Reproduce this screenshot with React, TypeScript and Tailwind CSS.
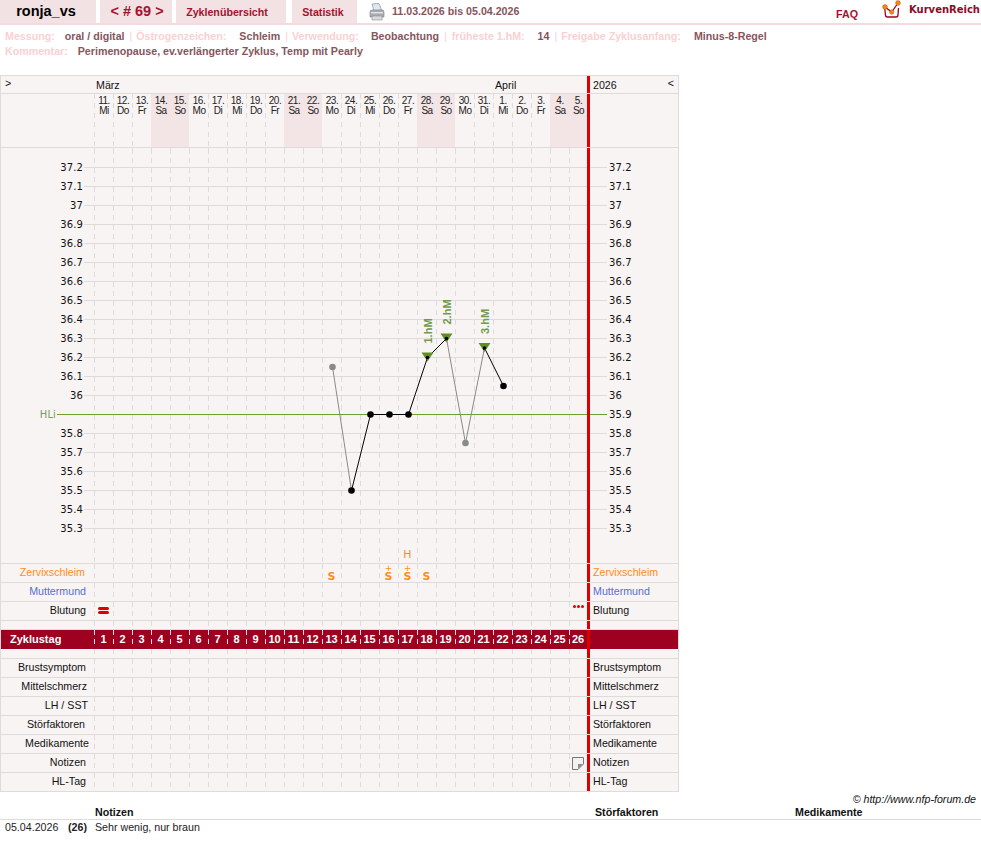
import type { ReactNode } from 'react';

const sans = "font-['Liberation_Sans',Arial,sans-serif]";
const days = Array.from({ length: 26 }, (_, i) => ({
  date: i < 21 ? i + 11 : i - 20,
  name: ['Mi', 'Do', 'Fr', 'Sa', 'So', 'Mo', 'Di'][i % 7],
  weekend: i % 7 === 3 || i % 7 === 4,
}));

const temps = ['37.2', '37.1', '37', '36.9', '36.8', '36.7', '36.6', '36.5', '36.4', '36.3', '36.2', '36.1', '36', '35.9', '35.8', '35.7', '35.6', '35.5', '35.4', '35.3'];

// Messwerte: Zyklustag + Temperatur, grau = ausgeklammert
const points = [
  { day: 13, t: 36.15, grey: true },
  { day: 14, t: 35.5 },
  { day: 15, t: 35.9 },
  { day: 16, t: 35.9 },
  { day: 17, t: 35.9 },
  { day: 18, t: 36.2, hm: '1.hM' },
  { day: 19, t: 36.3, hm: '2.hM' },
  { day: 20, t: 35.75, grey: true },
  { day: 21, t: 36.25, hm: '3.hM' },
  { day: 22, t: 36.05 },
];
const px = (day: number) => 94 + (day - 1) * 19 + 10.5;
const py = (t: number) => 167.5 + (37.2 - t) * 190;

const dashes = 'bg-[linear-gradient(to_bottom,#dedbd9_0,#dedbd9_5px,transparent_5px,transparent_9px,#dedbd9_9px,#dedbd9_14px,transparent_14px)] bg-[length:1px_19px] bg-repeat-y';

function Cells({ marks = {}, line = '', align = 'items-center', weekend = false }: { marks?: Record<number, ReactNode>; line?: string; align?: string; weekend?: boolean }) {
  return (
    <div className="flex h-full">
      {days.map((d, i) => {
        // im Kopf keine Striche auf den Wochenend-Feldern
        const plain = weekend && (d.weekend || days[i - 1]?.weekend);
        return (
          <div
            key={i}
            className={`flex h-full justify-center ${align} ${plain ? '' : dashes} ${i === 25 ? 'w-[18px]' : 'w-[19px]'} ${line} ${weekend && d.weekend ? 'bg-[#f3e4e6]' : ''}`}
          >
            {marks[i + 1]}
          </div>
        );
      })}
    </div>
  );
}

function Red() {
  return <div className="h-full w-[3px] shrink-0 bg-[#dd0000]" />;
}

function LabelRow({ label, color = 'text-[#111]', pr = 8, marks }: { label: string; color?: string; pr?: number; marks?: Record<number, ReactNode> }) {
  return (
    <div className="flex h-[19px] border-b border-[#dedbd9]">
      <div className={`w-[93px] text-right text-[10.67px] leading-[17px] ${color}`} style={{ paddingRight: pr }}>
        {label}
      </div>
      <Cells marks={marks} />
      <Red />
      <div className={`pl-[3px] text-[10.67px] leading-[17px] ${color}`}>{label}</div>
    </div>
  );
}

function Spacer({ h }: { h: string }) {
  return (
    <div className={`flex border-b border-[#dedbd9] ${h}`}>
      <div className="w-[93px]" />
      <Cells />
      <Red />
    </div>
  );
}

function TempRow({ value }: { value: string }) {
  const hl = value === '35.9';
  const line = hl ? 'border-b border-[#6f9f2f]' : 'border-b border-[#dedbd9]';
  const temp = "font-['DejaVu_Sans',sans-serif] text-[10px] tracking-[0.1px] leading-[14px] -mb-[7px]";
  return (
    <div className="flex h-[19px] items-end">
      {hl ? (
        <>
          <div className={`w-[56px] pr-[1px] text-right text-[#7a9a62] ${temp}`}>HLi</div>
          <div className={`h-full w-[37px] ${line}`} />
        </>
      ) : (
        <>
          <div className={`w-[83px] pr-[1px] text-right text-[#111] ${temp}`}>{value}</div>
          <div className={`h-full w-[10px] ${line}`} />
        </>
      )}
      <Cells line={line} />
      <Red />
      <div className={`h-full w-[17px] ${line}`} />
      <div className={`ml-[2px] text-[#111] ${temp}`}>{value}</div>
    </div>
  );
}

function Sign({ plus }: { plus?: boolean }) {
  return (
    <span className="flex flex-col items-center font-['DejaVu_Sans',sans-serif] text-[11px] font-bold text-[#ff8c1a]">
      <span className="h-[6px] text-[9px] font-normal leading-[6px]">{plus ? '+' : ''}</span>
      <span className="leading-[11px]">S</span>
    </span>
  );
}

function Blood() {
  return (
    <span className="mb-[1px] flex flex-col gap-[1px]">
      <span className="h-[3px] w-[11px] rounded-[2px] bg-[#dd0000]" />
      <span className="h-[3px] w-[11px] rounded-[2px] bg-[#dd0000]" />
    </span>
  );
}

function Dots() {
  return (
    <span className="mb-[9px] flex gap-[1px]">
      <span className="h-[3px] w-[3px] rounded-full bg-[#dd0000]" />
      <span className="h-[3px] w-[3px] rounded-full bg-[#dd0000]" />
      <span className="h-[3px] w-[3px] rounded-full bg-[#dd0000]" />
    </span>
  );
}

function Chart() {
  return (
    <svg className="pointer-events-none absolute -left-px -top-px" width={679} height={717} viewBox="0 75 679 717">
      {points.slice(1).map((p, i) => {
        const a = points[i];
        const grey = a.grey || p.grey;
        return <line key={i} x1={px(a.day)} y1={py(a.t)} x2={px(p.day)} y2={py(p.t)} stroke={grey ? '#8a8a8a' : '#000'} strokeWidth={1} />;
      })}
      {points.map((p) => (
        <g key={p.day}>
          {p.hm && <polygon points={`${px(p.day) - 6},${py(p.t) - 5} ${px(p.day) + 6},${py(p.t) - 5} ${px(p.day)},${py(p.t) + 4}`} fill="#5f8f23" />}
          {p.hm && <line x1={px(p.day)} y1={py(p.t)} x2={px(p.day) - 1} y2={py(p.t) + 2} stroke="#000" />}
          <circle cx={px(p.day)} cy={py(p.t)} r={p.hm ? 1.8 : 3.3} fill={p.grey ? '#8a8a8a' : '#000'} />
          {p.hm && (
            <text
              transform={`translate(${px(p.day) + 4},${py(p.t) - 14}) rotate(-90)`}
              fontFamily="'Liberation Sans',Arial,sans-serif"
              fontSize={11}
              fontWeight={700}
              fill="#6f9a4f"
            >
              {p.hm}
            </text>
          )}
        </g>
      ))}
    </svg>
  );
}

function Printer() {
  return (
    <svg width={16} height={18} viewBox="0 0 16 18" className="ml-[12px] mt-[3px] shrink-0">
      <path d="M3 1 L10 0.5 L12.5 7 L5 8 Z" fill="#dfe8f0" stroke="#8d99a6" strokeWidth={0.8} />
      <path d="M1 9 Q1 7 3 7 L13 7 Q15 7 15 9 L15 14 L1 14 Z" fill="#a9adb2" stroke="#7f8388" strokeWidth={0.6} />
      <rect x={3} y={13} width={10} height={4} fill="#d9dbde" stroke="#85898e" strokeWidth={0.6} />
      <rect x={2} y={9} width={12} height={1.4} fill="#e2e4e6" />
    </svg>
  );
}

function Logo() {
  return (
    <svg width={21} height={19} viewBox="0 0 21 19" className="shrink-0">
      <path d="M2.5 7 L3.5 15 Q3.5 17 5.5 17 L14 17 Q16 17 16 15 L16.5 8" fill="#fff" stroke="#a0001e" strokeWidth={1.3} />
      <path d="M3 7 L9.7 12 L16 3" fill="none" stroke="#a0001e" strokeWidth={1.3} />
      <circle cx={3} cy={7} r={2.4} fill="#f08a12" stroke="#c8501a" strokeWidth={0.5} />
      <circle cx={9.7} cy={12} r={2.2} fill="#f08a12" stroke="#c8501a" strokeWidth={0.5} />
      <circle cx={16} cy={3} r={2.4} fill="#f08a12" stroke="#c8501a" strokeWidth={0.5} />
    </svg>
  );
}

function Note() {
  return (
    <svg width={12} height={13} viewBox="0 0 12 13" className="mt-[1px]">
      <path d="M0.5 0.5 H11.5 V7 L6 12.5 H0.5 Z" fill="#f4f1f0" stroke="#777" />
      <path d="M11 7 H6 V12 Z" fill="#8c8c8c" />
    </svg>
  );
}

export default function App() {
  const lab = 'text-[#fbd0d2]';
  const val = 'text-[#86555d]';
  const info = 'font-bold text-[10.67px] leading-[15px]';
  return (
    <div className={`${sans} min-h-[851px] w-[981px] bg-white`}>
      {/* Kopfzeile */}
      <div className="relative flex h-[25px] border-b-2 border-[#f3dadc]">
        <div className="flex w-[96px] items-center justify-center bg-[#f3e2e4] pr-[4px] text-[14.5px] font-bold leading-none text-black">ronja_vs</div>
        <div className="ml-[4px] flex w-[72px] items-center justify-center bg-[#f3e2e4] pl-[2px] text-[14.5px] font-bold leading-none text-[#a4122c]">&lt; # 69 &gt;</div>
        <div className="ml-[4px] flex w-[110px] items-center justify-center bg-[#f3e2e4] pr-[8px] text-[10.67px] font-bold text-[#a4122c]">Zyklenübersicht</div>
        <div className="ml-[6px] flex w-[65px] items-center justify-center bg-[#f3e2e4] pr-[3px] text-[10.67px] font-bold text-[#a4122c]">Statistik</div>
        <Printer />
        <div className="ml-[7px] text-[10.67px] font-bold leading-[23px] text-[#86555d]">11.03.2026 bis 05.04.2026</div>
        <div className="ml-auto mt-[7px] text-[10.67px] font-bold leading-[14px] text-[#a4122c]">FAQ</div>
        <div className="ml-[24px] mr-[1px] flex items-start gap-[6px]">
          <Logo />
          <span className="mt-[3px] font-['DejaVu_Sans',sans-serif] text-[10px] font-bold leading-[14px] text-[#8c0a26]">KurvenReich</span>
        </div>
      </div>

      {/* Zyklusangaben */}
      <div className={`${info} mt-[4px] flex whitespace-nowrap pl-[5px]`}>
        <span className={lab}>Messung:</span>
        <span className={`ml-[10px] ${val}`}>oral / digital</span>
        <span className={`ml-[5px] font-normal ${lab}`}>|</span>
        <span className={`ml-[4px] ${lab}`}>Östrogenzeichen:</span>
        <span className={`ml-[13px] ${val}`}>Schleim</span>
        <span className={`ml-[5px] font-normal ${lab}`}>|</span>
        <span className={`ml-[4px] ${lab}`}>Verwendung:</span>
        <span className={`ml-[12px] ${val}`}>Beobachtung</span>
        <span className={`ml-[5px] font-normal ${lab}`}>|</span>
        <span className={`ml-[5px] ${lab}`}>früheste 1.hM:</span>
        <span className={`ml-[13px] ${val}`}>14</span>
        <span className={`ml-[5px] font-normal ${lab}`}>|</span>
        <span className={`ml-[4px] ${lab}`}>Freigabe Zyklusanfang:</span>
        <span className={`ml-[13px] ${val}`}>Minus-8-Regel</span>
      </div>
      <div className={`${info} flex whitespace-nowrap pl-[5px]`}>
        <span className={lab}>Kommentar:</span>
        <span className={`ml-[10px] ${val}`}>Perimenopause, ev.verlängerter Zyklus, Temp mit Pearly</span>
      </div>

      {/* Kurve */}
      <div className="relative mt-[16px] w-[679px] border-x border-t border-[#dedbd9] bg-[#f9f4f4] text-[#111]">
        <div className="flex h-[18px] border-b border-[#dedbd9] text-[10.67px] leading-[19px]">
          <div className="w-[93px] pl-[4px] leading-[14px]">&gt;</div>
          <div className="w-[399px] pl-[2px]">März</div>
          <div className="w-[94px] pl-[2px]">April</div>
          <Red />
          <div className="flex w-[87px] justify-between pl-[3px]">
            <span>2026</span>
            <span className="pr-[3px] leading-[14px]">&lt;</span>
          </div>
        </div>
        <div className="flex h-[54px] border-b border-[#dedbd9]">
          <div className="w-[93px]" />
          <Cells
            weekend
            align="items-start"
            marks={Object.fromEntries(
              days.map((d, i) => [
                i + 1,
                <div key={i} className="pl-[1px] pt-[2px] text-center text-[10px] leading-[10px] tracking-[-0.5px] text-[#222]">
                  {d.date}.
                  <br />
                  {d.name}
                </div>,
              ]),
            )}
          />
          <Red />
        </div>
        <div className="flex h-[1px]">
          <div className="w-[93px]" />
          <Cells />
          <Red />
        </div>
        {temps.map((t) => (
          <TempRow key={t} value={t} />
        ))}
        <div className="flex h-[35px] border-b border-[#dedbd9]">
          <div className="w-[93px]" />
          <Cells
            align="items-end"
            marks={{ 17: <span className="mb-[3px] font-['DejaVu_Sans',sans-serif] text-[11px] leading-[11px] text-[#ff8c1a]">H</span> }}
          />
          <Red />
        </div>
        <LabelRow label="Zervixschleim" color="text-[#ff8c1a]" pr={9} marks={{ 13: <Sign />, 16: <Sign plus />, 17: <Sign plus />, 18: <Sign /> }} />
        <LabelRow label="Muttermund" color="text-[#5470d0]" />
        <LabelRow label="Blutung" marks={{ 1: <Blood />, 26: <Dots /> }} />
        <Spacer h="h-[9px]" />
        <div className="flex h-[19px] bg-[#9e0020] text-[11px] font-bold leading-[19px] text-white">
          <div className="w-[93px] pl-[9px]">Zyklustag</div>
          <div className="flex">
            {days.map((_, i) => (
              <div
                key={i}
                className={`bg-[linear-gradient(to_bottom,#f3dde0_0,#f3dde0_5px,transparent_5px,transparent_9px,#f3dde0_9px,#f3dde0_14px,transparent_14px)] bg-[length:1px_19px] bg-repeat-y text-center ${i === 25 ? 'w-[18px]' : 'w-[19px]'}`}
              >
                {i + 1}
              </div>
            ))}
          </div>
          <Red />
        </div>
        <Spacer h="h-[10px]" />
        <LabelRow label="Brustsymptom" />
        <LabelRow label="Mittelschmerz" pr={7} />
        <LabelRow label="LH / SST" pr={6} />
        <LabelRow label="Störfaktoren" pr={9} />
        <LabelRow label="Medikamente" pr={5} />
        <LabelRow label="Notizen" marks={{ 26: <Note /> }} />
        <LabelRow label="HL-Tag" />
        <Chart />
      </div>

      {/* Notizen */}
      <div className="pr-[5px] text-right text-[10.67px] italic leading-[14px] text-[#111]">© http://www.nfp-forum.de</div>
      <div className="flex h-[14px] border-b border-[#dedbd9] text-[10.67px] font-bold leading-[13px] text-[#111]">
        <div className="ml-[95px] w-[500px]">Notizen</div>
        <div className="w-[200px]">Störfaktoren</div>
        <div>Medikamente</div>
      </div>
      <div className="flex text-[10.67px] leading-[15px] text-[#222]">
        <div className="ml-[5px] w-[63px]">05.04.2026</div>
        <div className="w-[27px] font-bold">(26)</div>
        <div>Sehr wenig, nur braun</div>
      </div>
    </div>
  );
}
